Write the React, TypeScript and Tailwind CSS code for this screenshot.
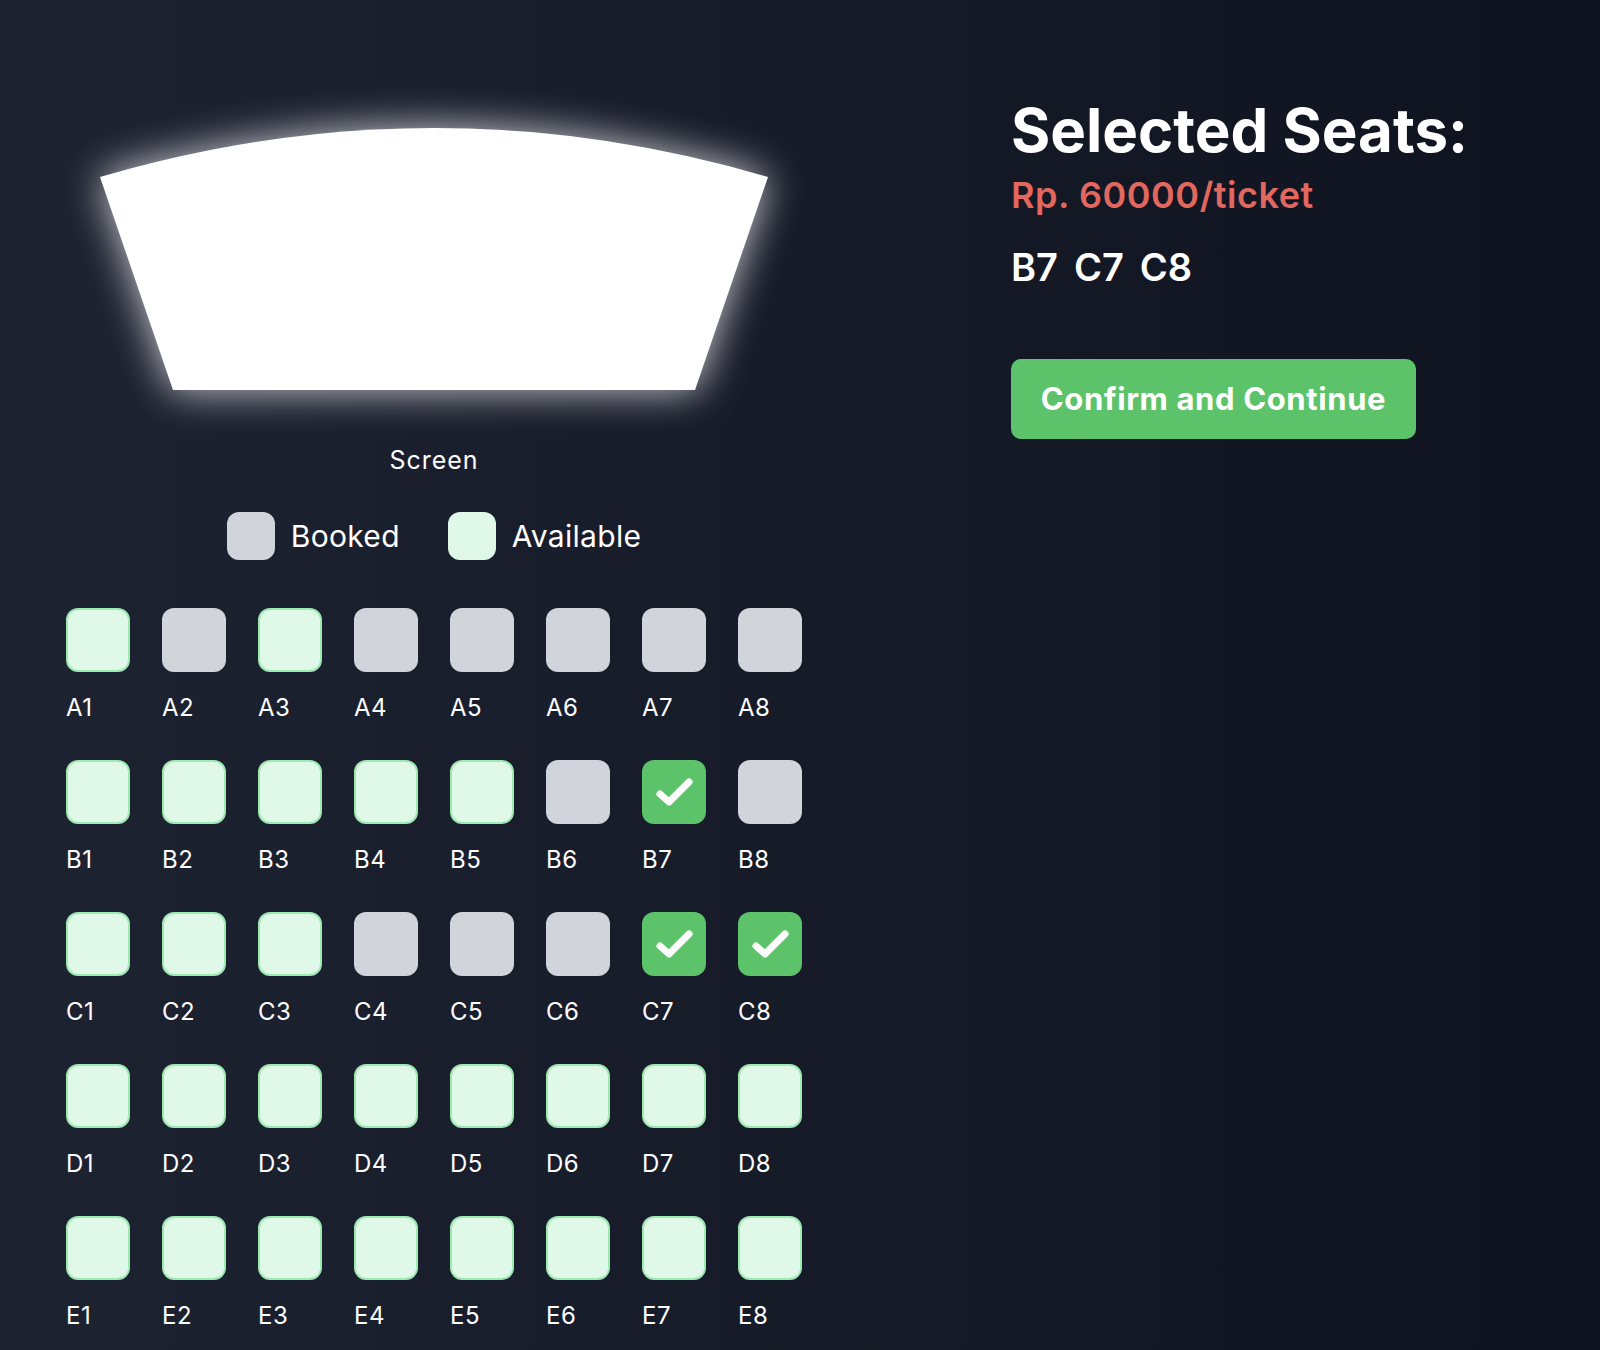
import React from "react";

type SeatState = "available" | "booked" | "selected";

const rows: { row: string; seats: SeatState[] }[] = [
  { row: "A", seats: ["available", "booked", "available", "booked", "booked", "booked", "booked", "booked"] },
  { row: "B", seats: ["available", "available", "available", "available", "available", "booked", "selected", "booked"] },
  { row: "C", seats: ["available", "available", "available", "booked", "booked", "booked", "selected", "selected"] },
  { row: "D", seats: ["available", "available", "available", "available", "available", "available", "available", "available"] },
  { row: "E", seats: ["available", "available", "available", "available", "available", "available", "available", "available"] },
];

function Seat({ state }: { state: SeatState }) {
  if (state === "selected") {
    return (
      <div className="w-16 h-16 rounded-xl bg-[#5cc36a] flex items-center justify-center">
        <svg width="64" height="64" viewBox="0 0 64 64" fill="none">
          <path d="M18 34 L27 42 L47 22" stroke="white" strokeWidth="7" strokeLinecap="round" strokeLinejoin="round" />
        </svg>
      </div>
    );
  }
  if (state === "booked") {
    return <div className="w-16 h-16 rounded-xl bg-[#d1d5db]" />;
  }
  return <div className="w-16 h-16 rounded-xl bg-[#e0f8e8] border-2 border-[#9ee8b1]" />;
}

export default function App() {
  return (
    <div
      className="min-h-screen w-full flex bg-gradient-to-r from-[#1e2332] to-[#0f131f] text-white"
      style={{ fontFamily: "Inter, 'Noto Sans', sans-serif" }}
    >
      <div className="w-[868px] flex flex-col items-center shrink-0">
        <svg
          width="668"
          height="262"
          viewBox="0 0 668 262"
          className="mt-[128px] overflow-visible drop-shadow-[0_0_20px_rgba(255,255,255,0.8)]"
        >
          <path d="M0 49 Q334 -49 668 49 L595 262 L73 262 Z" fill="white" />
        </svg>
        <div className="mt-[54px] text-[25px] leading-[32px] tracking-[0.04em]">Screen</div>
        <div className="mt-[36px] flex items-center gap-12">
          <div className="flex items-center gap-4">
            <div className="w-12 h-12 rounded-xl bg-[#d1d5db]" />
            <span className="text-[30px] leading-[36px] tracking-[0.01em]">Booked</span>
          </div>
          <div className="flex items-center gap-4">
            <div className="w-12 h-12 rounded-xl bg-[#e0f8e8]" />
            <span className="text-[30px] leading-[36px] tracking-[0.01em]">Available</span>
          </div>
        </div>
        <div className="mt-[48px] grid grid-cols-8 gap-x-8 gap-y-9 pb-[22px]">
          {rows.map((r) =>
            r.seats.map((s, i) => (
              <div key={`${r.row}${i + 1}`} className="flex flex-col">
                <Seat state={s} />
                <div className="mt-5 text-[24px] leading-[32px] tracking-[0.02em]">{`${r.row}${i + 1}`}</div>
              </div>
            ))
          )}
        </div>
      </div>
      <div className="ml-[143px] mt-[100px] flex flex-col items-start">
        <h1 className="text-[60px] leading-[60px] font-bold">Selected Seats:</h1>
        <div className="mt-[15px] text-[36px] leading-[40px] font-semibold tracking-[0.015em] text-[#e2685f]">Rp. 60000/ticket</div>
        <div className="mt-[29px] flex gap-4 text-[38px] leading-[46px] font-semibold">
          <span>B7</span>
          <span>C7</span>
          <span>C8</span>
        </div>
        <button className="mt-[69px] w-[405px] h-[80px] rounded-[10px] bg-[#5cc36a] text-[31px] font-bold tracking-[0.02em] text-white flex items-center justify-center">
          Confirm and Continue
        </button>
      </div>
    </div>
  );
}
